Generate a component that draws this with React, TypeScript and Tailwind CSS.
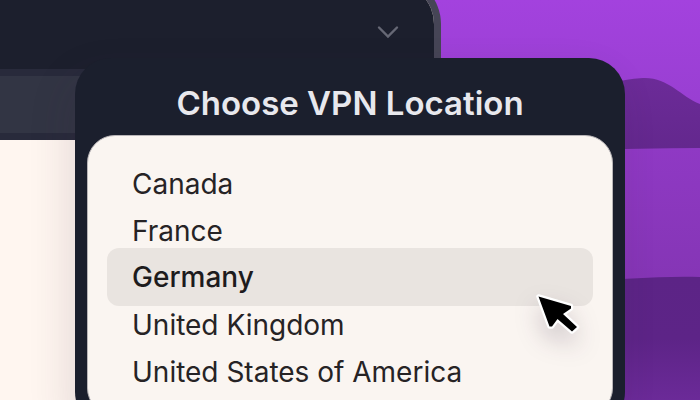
import { useState } from "react";

const locations = [
  "Canada",
  "France",
  "Germany",
  "United Kingdom",
  "United States of America",
];

function Wallpaper() {
  return (
    <svg
      className="absolute inset-0 h-full w-full"
      viewBox="0 0 700 400"
      preserveAspectRatio="xMaxYMin slice"
      aria-hidden="true"
    >
      <defs>
        <linearGradient id="sky" x1="0" y1="0" x2="0" y2="1">
          <stop offset="0" stopColor="#a342de" />
          <stop offset="0.25" stopColor="#993fd2" />
          <stop offset="1" stopColor="#953dce" />
        </linearGradient>
        <linearGradient id="far" x1="0" y1="0" x2="0" y2="1">
          <stop offset="0" stopColor="#6c2b98" />
          <stop offset="1" stopColor="#62278c" />
        </linearGradient>
        <linearGradient id="mid" x1="0" y1="0" x2="0" y2="1">
          <stop offset="0" stopColor="#8f39c4" />
          <stop offset="1" stopColor="#8435b4" />
        </linearGradient>
        <linearGradient id="near" x1="0" y1="0" x2="0" y2="1">
          <stop offset="0" stopColor="#5c2486" />
          <stop offset="0.5" stopColor="#5d2487" />
          <stop offset="1" stopColor="#6b2a98" />
        </linearGradient>
      </defs>
      <rect width="700" height="400" fill="url(#sky)" />
      <path d="M580 90C600 88 618 79 643 78C668 77 680 96 700 104V160H580Z" fill="url(#far)" />
      <path d="M580 150C620 149 660 148 700 148V290H580Z" fill="url(#mid)" />
      <path d="M580 283C620 279 660 276 700 277V400H580Z" fill="url(#near)" />
    </svg>
  );
}

function BackWindow() {
  return (
    <section
      aria-label="Browser"
      className="absolute -top-6 bottom-0 left-0 w-[63%] overflow-hidden rounded-tr-[48px] border-r-[7px] border-t-[7px] border-[#464556] bg-[#fff6f0]"
    >
      <div className="flex h-[86px] items-center justify-end bg-[#1c1f2d] pt-[11px] pr-[34px]">
        <button type="button" aria-label="Show more" className="text-[#666875]">
          <svg width="24" height="14" viewBox="0 0 24 14" fill="none" aria-hidden="true">
            <path d="M3 2.5L12 11.5L21 2.5" stroke="currentColor" strokeWidth="2.4" strokeLinecap="round" />
          </svg>
        </button>
      </div>
      <div className="h-[71px] border-y-[7px] border-[#282a3b] bg-[#323544]" />
    </section>
  );
}

function Cursor() {
  return (
    <svg
      className="pointer-events-none absolute right-[11px] top-[38px] z-10 overflow-visible drop-shadow-[0_12px_12px_rgba(40,20,50,0.2)]"
      width="48"
      height="44"
      viewBox="0 0 48 44"
      aria-hidden="true"
    >
      <path
        d="M4.500 4.500L37 14V16.500L29 22L43 35L38 39.500L23.500 27L18 34.500H15.500Z"
        fill="#000"
        stroke="#fff"
        strokeWidth="4.5"
        strokeLinejoin="round"
        paintOrder="stroke"
      />
    </svg>
  );
}

export default function App() {
  const [selected, setSelected] = useState("Germany");

  return (
    <main className="relative h-screen overflow-hidden bg-[#953dce] font-['Inter','Liberation_Sans',sans-serif]">
      <Wallpaper />
      <BackWindow />
      <div className="relative px-[75px] pt-[58px]">
        <div
          role="dialog"
          aria-labelledby="vpn-title"
          className="rounded-[36px] bg-[#1b1f2d] px-3 pb-3 shadow-[-8px_16px_40px_rgba(60,30,60,0.12)]"
        >
          <h1
            id="vpn-title"
            className="pt-[26px] pb-[13px] text-center text-[33px] leading-[38px] font-semibold text-[#e8e8ed]"
          >
            Choose VPN Location
          </h1>
          <ul className="flex flex-col rounded-[28px] border border-[#b9b5b8] bg-[#faf5f1] px-[19px] pt-6 pb-5">
            {locations.map((name) => {
              const active = name === selected;
              return (
                <li key={name} className="relative h-[47px]">
                  <button
                    type="button"
                    aria-pressed={active}
                    onClick={() => setSelected(name)}
                    className={
                      active
                        ? "-my-[6px] h-[58px] w-full rounded-xl bg-[#e9e4e0] px-[25px] text-left text-[28px] font-medium text-[#1d1b1d]"
                        : "h-[47px] w-full px-[25px] text-left text-[28px] text-[#262325]"
                    }
                  >
                    {name}
                  </button>
                  {active && <Cursor />}
                </li>
              );
            })}
          </ul>
        </div>
      </div>
    </main>
  );
}
